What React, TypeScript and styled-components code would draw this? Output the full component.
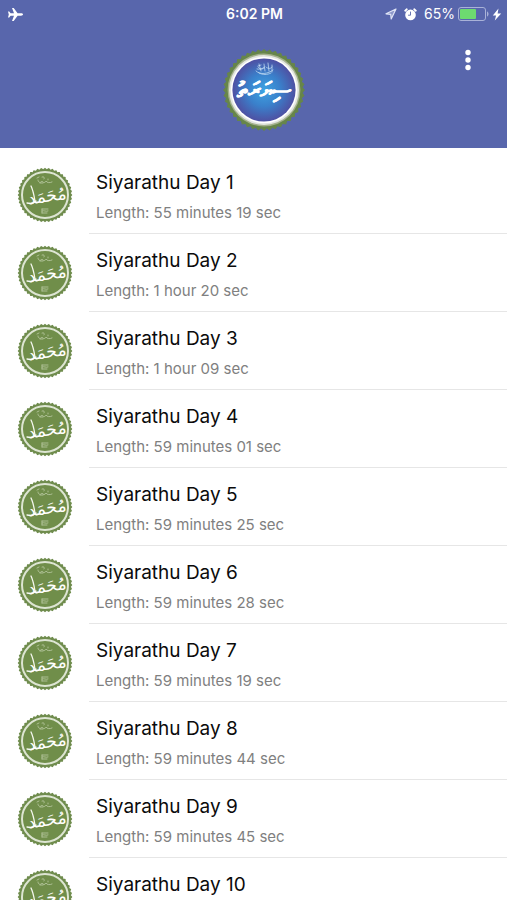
import React from "react";
import styled, { createGlobalStyle } from "styled-components";

const GlobalStyle = createGlobalStyle`
  *, *::before, *::after { box-sizing: border-box; }
  html, body, #root { height: 100%; }
  body {
    margin: 0;
    background: #fff;
    color: #0b0b0b;
    font-family: Inter, "Liberation Sans", sans-serif;
  }
`;

const Screen = styled.div`
  display: flex;
  flex-direction: column;
  height: 100%;
  overflow: hidden;
`;

const Header = styled.header`
  flex: none;
  background: #5866ac;
  color: #fff;
`;

const StatusBar = styled.div`
  display: grid;
  grid-template-columns: 1fr auto 1fr;
  align-items: center;
  height: 28px;
  padding: 0 5px 0 7px;
`;

const Clock = styled.time`
  font-size: 14px;
  line-height: 16px;
  font-weight: 600;
`;

const StatusIcons = styled.div`
  display: flex;
  align-items: center;
  justify-content: flex-end;
  gap: 7px;
`;

const Power = styled.div`
  display: flex;
  align-items: center;
  gap: 3px;
  font-size: 14px;
  line-height: 16px;
`;

const TitleBar = styled.div`
  display: grid;
  grid-template-columns: 1fr auto 1fr;
  height: 120px;
  padding: 21px 24px 0 0;
`;

const Brand = styled.h1`
  grid-column: 2;
  margin: 0 0 0 44px;
  line-height: 0;
`;

const MenuButton = styled.button`
  justify-self: end;
  align-self: start;
  display: flex;
  align-items: center;
  justify-content: center;
  width: 30px;
  height: 22px;
  padding: 0;
  border: 0;
  background: none;
  color: inherit;
  cursor: pointer;
`;

const List = styled.ul`
  flex: 1;
  min-height: 0;
  overflow: hidden;
  margin: 0;
  padding: 8px 0 0;
  list-style: none;
`;

const Row = styled.li`
  display: flex;
  align-items: center;
  height: 78px;
  padding-left: 17px;
`;

const Details = styled.div`
  flex: 1;
  align-self: stretch;
  display: flex;
  flex-direction: column;
  gap: 7px;
  margin-left: 16px;
  padding: 14px 7px 0;
  border-bottom: 1px solid #e6e6e6;
`;

const Title = styled.h2`
  margin: 0;
  font-size: 19px;
  line-height: 26px;
  font-weight: 400;
`;

const Length = styled.p`
  margin: 0;
  font-size: 15px;
  line-height: 20px;
  color: #808080;
`;

function scallop(c: number, r: number, depth: number, count: number) {
  const points: string[] = [];
  for (let i = 0; i < count * 4; i++) {
    const a = (i / (count * 4)) * Math.PI * 2;
    const d = r + Math.cos(a * count) * depth;
    points.push(`${(c + Math.cos(a) * d).toFixed(2)},${(c + Math.sin(a) * d).toFixed(2)}`);
  }
  return points.join(" ");
}

const BRAND_EDGE = scallop(41, 39.8, 1.1, 44);
const SEAL_EDGE = scallop(28, 26.6, 0.7, 44);

const BrandSeal = () => (
  <svg width="82" height="82" viewBox="0 0 82 82" role="img" aria-label="Siyarathu">
    <defs>
      <radialGradient id="brand-glow" cx="50%" cy="50%" r="52%">
        <stop offset="0" stopColor="#3ea3e2" />
        <stop offset="0.5" stopColor="#3a80cb" />
        <stop offset="1" stopColor="#504c9f" />
      </radialGradient>
    </defs>
    <polygon points={BRAND_EDGE} fill="#66854a" />
    <circle cx="41" cy="41" r="36.4" fill="#a3b08c" />
    <circle cx="41" cy="41" r="35" fill="#e3e6e0" />
    <circle cx="41" cy="41" r="33.2" fill="#fff" />
    <circle cx="41" cy="41" r="31.6" fill="url(#brand-glow)" />
    <g fill="none" stroke="#cfe4f7" strokeWidth="0.7" strokeLinecap="round">
      <path d="M35 18c2 3 5 3 6 0M36 15l2 7M41 15l1 7M45 14l1 8M49 16l0 7M33 22c4 4 12 3 17-1M36 24c4 2 8 2 12 0M35 17l3-1M43 18c2 2 5 2 6 0M34 20c3 1 5-1 7-1" />
    </g>
    <text x="41" y="48" textAnchor="middle" fontSize="22" fontFamily='"DejaVu Sans", "Noto Sans", sans-serif' fill="#fff" stroke="#fff" strokeWidth="0.3">
      ސިޔަރަތު
    </text>
  </svg>
);

const Seal = () => (
  <svg width="56" height="56" viewBox="0 0 56 56" aria-hidden="true">
    <polygon points={SEAL_EDGE} fill="#6f8c4d" />
    <circle cx="28" cy="28" r="23" fill="#708e4a" stroke="#dde5d2" strokeWidth="2" />
    <g fill="none" stroke="#bccba6" strokeWidth="0.8" strokeLinecap="round">
      <path d="M21 13c0 3 3 3 4 1c1 2 3 2 4 0c1 2 4 2 6 1M20 11l2-1M23 16h3M31 12v1M25 10c2-1 3 1 2 2" />
      <path d="M25 42h6M25 44c2-1 4 1 6 0M25 46h5M25 42v4" />
    </g>
    <path d="M14 19c2 4 3 9 4 15M10 36c4 1 7 0 9-2" fill="none" stroke="#f4f7ef" strokeWidth="1.3" strokeLinecap="round" />
    <text x="30" y="35" textAnchor="middle" fontSize="17" transform="rotate(-8 28 30)" fontFamily='"DejaVu Sans", sans-serif' fill="#fff">
      مُحَمَد
    </text>
  </svg>
);

const Airplane = () => (
  <svg width="17" height="15" viewBox="0 0 17 15" aria-label="Airplane mode" role="img">
    <path fill="#fff" d="M16 7.500c0-.7-.8-1.200-2-1.200h-3.400L6.700 1H5l2 5.300H3.600L2.200 4.500H1l.8 3-.8 3h1.200l1.400-1.800H7L5 14h1.700l3.900-5.300H14c1.200 0 2-.5 2-1.200z" />
  </svg>
);

const Location = () => (
  <svg width="12" height="12" viewBox="0 0 12 12" aria-hidden="true">
    <path fill="#8d98ca" stroke="#dfe4f6" strokeWidth="1.200" strokeLinejoin="round" d="M11 1L1 5.800l4.700.5.500 4.700z" />
  </svg>
);

const Alarm = () => (
  <svg width="13" height="13" viewBox="0 0 13 13" aria-hidden="true">
    <circle cx="6.500" cy="6.900" r="5.300" fill="#fff" />
    <path fill="none" stroke="#fff" strokeWidth="1.800" strokeLinecap="round" d="M1.200 2.700l1.600-1.400M11.800 2.700l-1.600-1.400" />
    <path fill="none" stroke="#5866ac" strokeWidth="0.900" strokeLinecap="round" d="M6.500 4v3.200H4.500" />
  </svg>
);

const Battery = () => (
  <svg width="31" height="14" viewBox="0 0 31 14" aria-hidden="true">
    <rect x="0.500" y="0.500" width="27" height="13" rx="2.500" fill="none" stroke="#a9b2d8" />
    <rect x="2" y="2" width="16" height="10" rx="1" fill="#6dda70" />
    <path d="M29 4.500c2 .6 2 4.400 0 5z" fill="#a9b2d8" />
  </svg>
);

const Bolt = () => (
  <svg width="10" height="13" viewBox="0 0 10 13" aria-hidden="true">
    <path fill="#fff" d="M6.500.500L.800 7.400h3.300L2.800 12.500L9.200 5.400H5.600z" />
  </svg>
);

const Dots = () => (
  <svg width="6" height="22" viewBox="0 0 6 22" aria-hidden="true">
    <g fill="#fff">
      <circle cx="3" cy="3.500" r="2.700" />
      <circle cx="3" cy="11" r="2.700" />
      <circle cx="3" cy="18.500" r="2.700" />
    </g>
  </svg>
);

const lengths = [
  "55 minutes 19 sec",
  "1 hour 20 sec",
  "1 hour 09 sec",
  "59 minutes 01 sec",
  "59 minutes 25 sec",
  "59 minutes 28 sec",
  "59 minutes 19 sec",
  "59 minutes 44 sec",
  "59 minutes 45 sec",
];

export default function App() {
  return (
    <>
      <GlobalStyle />
      <Screen>
        <Header>
          <StatusBar>
            <Airplane />
            <Clock>6:02 PM</Clock>
            <StatusIcons>
              <Location />
              <Alarm />
              <Power>
                <span>65%</span>
                <Battery />
                <Bolt />
              </Power>
            </StatusIcons>
          </StatusBar>
          <TitleBar>
            <Brand>
              <BrandSeal />
            </Brand>
            <MenuButton type="button" aria-label="More options">
              <Dots />
            </MenuButton>
          </TitleBar>
        </Header>
        <List>
          {lengths.map((length, i) => (
            <Row key={i}>
              <Seal />
              <Details>
                <Title>Siyarathu Day {i + 1}</Title>
                <Length>Length: {length}</Length>
              </Details>
            </Row>
          ))}
          <Row>
            <Seal />
            <Details>
              <Title>Siyarathu Day 10</Title>
            </Details>
          </Row>
        </List>
      </Screen>
    </>
  );
}
